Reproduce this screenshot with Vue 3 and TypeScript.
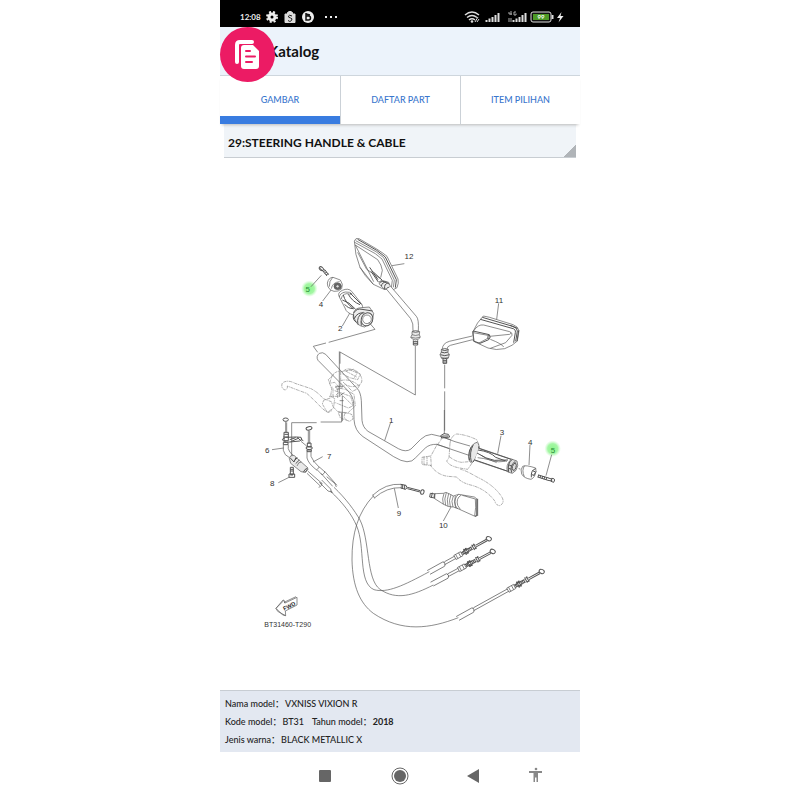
<script setup lang="ts">
import { ref } from 'vue'

interface Tab {
  id: string
  label: string
}

interface Callout {
  text: string
  x: number
  y: number
}

interface CableEnd {
  x: number
  y: number
  angle: number
  arm: number
}

const tabs: Tab[] = [
  { id: 'gambar', label: 'GAMBAR' },
  { id: 'daftar', label: 'DAFTAR PART' },
  { id: 'item', label: 'ITEM PILIHAN' },
]
const activeTab = ref<string>('gambar')
const figure = ref<string>('29')

// Part numbers, in drawing units (three per pixel)
const callouts: Callout[] = [
  { text: '12', x: 567, y: 303 },
  { text: '11', x: 837, y: 434 },
  { text: '5', x: 263, y: 403 },
  { text: '4', x: 303, y: 446 },
  { text: '2', x: 361, y: 520 },
  { text: '1', x: 514, y: 794 },
  { text: '3', x: 846, y: 831 },
  { text: '4', x: 931, y: 862 },
  { text: '5', x: 999, y: 884 },
  { text: '6', x: 142, y: 886 },
  { text: '7', x: 328, y: 904 },
  { text: '8', x: 157, y: 985 },
  { text: '9', x: 537, y: 1073 },
  { text: '10', x: 670, y: 1111 },
]

const cableEnds: CableEnd[] = [
  { x: 628, y: 1241, angle: -29, arm: 0 },
  { x: 638, y: 1276, angle: -28, arm: 0 },
  { x: 715, y: 1379, angle: -29, arm: 82 },
]
</script>

<template>
  <div class="phone">
    <div class="status">
      <span class="clock">12:08</span>
      <svg class="left-icons" width="100" height="14" viewBox="0 0 100 14" aria-hidden="true">
        <circle cx="7" cy="7" r="3" fill="none" stroke="#eee" stroke-width="3" />
        <circle cx="7" cy="7" r="5" fill="none" stroke="#eee" stroke-width="2" stroke-dasharray="2 2" />
        <path d="M20 4h10v8.500h-10zM22.500 4V2.500q2.500-2.500 5 0V4" fill="#ddd" stroke="#ddd" />
        <path d="M27 6q-3-1.500-3.500 0t2 2 1 2.500-3.500 0" fill="none" stroke="#222" stroke-width="1" />
        <circle cx="43" cy="7" r="6" fill="#eee" />
        <path d="M41 3v7h2.500a2 2 0 0 0 0-4H41M41 4l4 1" fill="none" stroke="#111" stroke-width="1.500" />
        <path d="M60 7h2M65 7h2M70 7h2" stroke="#eee" stroke-width="2" />
      </svg>
      <svg class="right-icons" width="102" height="16" viewBox="0 0 102 16" aria-hidden="true">
        <g fill="none" stroke="#ddd" stroke-width="1.500">
          <path d="M1 6q7-6 14 0M3 8.500q5-4 10 0M5 11q3-2.500 6 0" />
          <path d="M11 13l3-5M13 13l2-3" stroke-width="1" />
        </g>
        <circle cx="8" cy="12.500" r="1.300" fill="#ddd" />
        <path d="M22.500 13v-2M25.500 13V9.500M28.500 13V8M31.500 13V6M34.500 13V4M49.500 13v-2M52.500 13V9.500M55.500 13V8M58.500 13V6M61.500 13V4" stroke="#ddd" stroke-width="2" />
        <path d="M45 3v2h3M47 2v4M52 3h-2v3h2V4.500M45 9v4M47 9v4" fill="none" stroke="#aaa" stroke-width="1" />
        <rect x="67" y="3" width="20" height="10" rx="2" fill="#111" stroke="#ddd" />
        <rect x="69" y="5" width="16" height="6" fill="#4d9a26" />
        <text x="77" y="10" class="charge">99</text>
        <path d="M88.500 6v4" stroke="#ddd" stroke-width="2" />
        <path d="M97.500 3L93 9h3l-1.500 4.500L99.500 7h-3z" fill="#eee" />
      </svg>
    </div>

    <header class="header">
      <h1>Katalog</h1>
      <button class="float" type="button" aria-label="Salin">
        <svg width="55" height="55" viewBox="0 0 55 55" aria-hidden="true">
          <path d="M17 35V18q0-3 3-3H32" fill="none" stroke="#fff" stroke-width="4" stroke-linecap="round" />
          <path d="M24 18h9l6 6v15q0 3-3 3H24q-3 0-3-3V21q0-3 3-3z" fill="#fff" />
          <path d="M26 24h4M26 29.500h9M26 35h6" stroke="#ec1b64" stroke-width="2" stroke-linecap="round" />
        </svg>
      </button>
    </header>

    <nav class="tabs" role="tablist">
      <button
        v-for="tab in tabs"
        :key="tab.id"
        type="button"
        role="tab"
        class="tab"
        :class="{ active: tab.id === activeTab }"
        :aria-selected="tab.id === activeTab"
        @click="activeTab = tab.id"
      >
        {{ tab.label }}
      </button>
    </nav>

    <div class="picker">
      <select v-model="figure" aria-label="Figure">
        <option value="29">29:STEERING HANDLE &amp; CABLE</option>
      </select>
    </div>

    <main class="figure">
      <svg class="drawing" viewBox="0 0 1080 1596" role="img" aria-label="Steering handle and cable">
        <defs>
          <radialGradient id="glow">
            <stop offset="0" stop-color="#8df58d" />
            <stop offset="0.600" stop-color="#a4f7a4" />
            <stop offset="1" stop-color="#c8fbc8" stop-opacity="0" />
          </radialGradient>
        </defs>
        <circle cx="268" cy="392" r="25" fill="url(#glow)" />
        <circle cx="998" cy="872" r="25" fill="url(#glow)" />

        <!-- left mirror, bar end and throttle grip -->
        <g class="ink" transform="translate(210 201)">
          <path d="M193 48L198 41L207 41L260 72Q282 86 291 94L324 162Q327 174 321 188L310 194L282 193L250 178Q222 151 210 127Q194 88 193 48z" fill="#fff" />
          <path d="M197 47L258 80L281 98L313 165L310 187M194 52L256 86L276 102L307 166L304 188" />
          <path class="bold" d="M203 43L260 76L286 96L319 164L316 188" />
          <path d="M196 60L263 104Q275 120 277 136L272 158M196 60L251 170M203 82L230 133L270 160M210 127L250 178" />
          <path class="bold" d="M239 127L264 164M243 139L265 171M250 141L276 165" />
          <path d="M268 177Q263 169 276 166L296 172L302 186L283 193z" fill="#eee" />
          <path class="bold" d="M270 172Q283 164 298 178M274 184q2-13 14-12M284 192q-2-16 9-17M292 188l9-2" />
          <path d="M290 193L362 281Q371 294 369 318H385Q387 282 379 274L302 184" fill="#fff" />
          <path d="M366 320Q375 315 389 320L388 329L391 337Q387 344 376 345Q365 343 362 337L366 329z" fill="#e8e8e8" />
          <path d="M366 329q10 5 22 0M366 320q10 5 22 0M363 337q14 5 27 0" />
          <path class="bold" d="M370 346v14h13v-14M370 350h13M370 355h13" />
          <path d="M376 363V510L150 381V416" />
          <path d="M343 116L306 122M63 185L94 151M98 228L124 194M157 303L179 265" />
          <ellipse class="bold" cx="94" cy="131" rx="7" ry="5" transform="rotate(35 94 131)" />
          <path class="bold" d="M97 136L111 153M103 133L116 149M100 140l7-4M104 145l7-4M108 150l7-4M88 128l8 8" />
          <path d="M112 174Q116 157 129 157L151 165Q161 178 155 191Q145 201 132 199Q112 194 112 174zM124 191Q127 172 149 170M128 157Q117 168 118 185" fill="#fff" />
          <ellipse class="dark" cx="143" cy="184" rx="11" ry="10" />
          <path class="white" d="M138 184h9M143 180v8" />
          <path d="M148 216Q141 203 157 196Q175 188 185 199L215 237Q220 243 216 252L194 271Q169 265 165 249z" fill="#fff" />
          <path d="M148 216Q150 204 166 201Q181 200 187 207M154 222Q155 208 170 206L184 208" />
          <path class="bold" d="M157 225Q177 230 197 253M164 238Q174 251 191 251M175 208Q187 230 210 239M160 210Q165 232 190 251M180 204L214 238" />
          <path d="M190 269Q191 249 214 248L238 246L251 265L246 291L224 306Q199 302 194 282z" fill="#ededed" />
          <path class="bold" d="M191 264Q200 249 216 253L248 258M193 281Q202 260 224 264M204 299Q198 274 220 262M214 302Q209 277 230 266M191 268q-5 17 9 24" />
          <ellipse class="bold" cx="231" cy="283" rx="17" ry="20" transform="rotate(25 231 283)" fill="#fff" />
          <circle cx="231" cy="283" r="13" />
          <path d="M236 291L255 313L116 352M108 354L70 364L83 382" />
        </g>

        <!-- right mirror -->
        <g class="ink" transform="translate(600 366)">
          <path d="M158 157Q171 126 190 108L209 112L279 134Q294 139 297 152L292 183Q279 197 254 206Q229 212 204 204L163 185z" fill="#fff" />
          <path class="bold" d="M187 112L278 139Q292 143 292 153L287 184M181 118L276 145Q288 147 286 158L281 188M296 151L291 184M270 136L293 145" />
          <path d="M160 154Q174 132 191 135L269 155Q278 158 276 166L257 188L211 205M209 169L269 163Q273 162 272 157M211 178Q247 192 251 201" />
          <path class="bold" d="M159 153L208 164Q214 172 206 179L180 190L160 183zM205 166q-4 8 1 12" />
          <path d="M160 158L209 167M177 189L209 172" />
          <path d="M157 168L88 184Q67 190 67 208H81Q81 199 91 196L158 179" fill="#fff" />
          <path d="M64 208Q75 202 85 208L84 217L88 224L85 234H64L60 224L64 216z" fill="#e8e8e8" />
          <path class="bold" d="M64 209q10 5 21 0M63 216q10 5 21 0M61 224q13 6 27 0M64 234q10 4 21 0M69 237v13h11v-13M69 241h11M69 246h11" />
          <path d="M74 254V325M74 334V452M236 70L230 118" />
        </g>

        <!-- handlebar, front lever and upper cable fittings -->
        <g class="ink" transform="translate(120 546)">
          <path d="M174 61Q167 49 178 40Q188 35 197 43L291 145Q302 155 304 182L306 241Q308 262 324 274L415 326Q438 338 453 327L482 298Q496 284 515 283L545 290L585 304M174 61L259 147Q280 168 281 190L282 239Q284 272 309 290L401 350Q448 379 467 353L496 324Q509 312 531 313L630 347" />
          <path d="M238 34V170M392 247L374 302M245 218V246H182M170 248H95V349M36 329L71 324M188 350L159 366M55 428L87 412" />
          <g class="phantom">
            <path d="M67 129Q61 144 75 150Q84 147 82 138Q109 149 140 160Q164 181 187 206L204 218L217 211M70 127Q85 119 105 130L153 146Q174 157 190 176L214 185L221 204L202 217L187 192L191 181L214 173" />
            <path d="M209 130L216 107Q230 90 244 95L281 88Q309 104 305 126L292 147L277 154L256 133L242 146L224 127zM216 140L212 168L224 176L221 202L232 214L262 220L286 198L282 163L256 148L225 142" />
            <path d="M250 94Q257 83 278 89L301 102L293 119L269 113L247 101M257 93L290 111M268 89L292 99L283 113M222 103L205 119L214 144M241 122Q270 114 297 137M249 126Q270 149 300 134" />
            <path d="M224 152L272 169L280 197L265 204L226 188M235 218Q255 214 276 224L279 237L269 244L241 234zM256 219q-9 14 5 22M219 145v28M233 147v27M207 169h35M242 95v47M250 169l29 28M228 165l10-8 15 16" />
          </g>
          <path d="M226 139h23M247 168v75M229 147h10M241 166l12-8M239 182h12" />
          <ellipse class="bold" cx="77" cy="239" rx="8" ry="5" />
          <path d="M77 245V277M80 247V277" />
          <path class="bold" d="M72 277h13v25h-13zM73 283h12M70 291h17M67 298L77 292L109 291L123 292Q130 299 119 303L89 306Q70 308 67 298zM70 307h14v7h-14zM89 299l18-6M92 305l25-11M112 292l9 9M122 298l8 4" />
          <path d="M70 314Q67 333 76 344L90 354M85 314Q82 326 90 337L101 347" />
          <path d="M88 355Q89 345 102 346L117 360L144 384L137 397L123 395L92 370z" fill="#e8e8e8" />
          <path class="bold" d="M91 354l11 12 6-14M99 366l13-13M107 371l11-11M130 397q4-11 12-12M135 397L144 388" />
          <path d="M111 378q4-13 13-12M144 394L188 432M141 400L181 438M182 427Q189 438 176 442" />
          <path class="bold" d="M91 382h9v21h-9zM91 388h9M91 393h9M87 402h17v10h-17zM91 405h8" />
          <ellipse class="bold" cx="147" cy="265" rx="9" ry="5" transform="rotate(-12 147 265)" />
          <path d="M145 272V312M149 272V312M123 304L140 318" />
          <path class="bold" d="M142 309h11v12h-11zM139 321q8-4 17 0v6q-9 4-17 0zM141 330h13v5h-13z" />
          <path d="M141 335V354Q145 371 171 391M153 335V349Q158 363 178 382M171 389l7-8 17 15-8 9zM183 400L218 439M193 393L231 436M178 427l26 26 14 4M185 420l27 27 3 11M200 410l25 21 4 10" />
        </g>

        <!-- clutch side controls, grip and cable boot -->
        <g class="ink" transform="translate(540 756)">
          <path d="M133 0V72" />
          <path d="M148 108Q150 77 170 72Q199 74 230 89L237 105L215 158L203 178L179 174L147 143z" class="cover" />
          <path d="M125 80L165 95L210 108M110 103L210 137" />
          <g class="phantom">
            <path d="M125 80L123 90L109 108L92 139M150 100Q153 77 170 72Q199 74 230 89L237 105M150 100L147 143L140 153Q147 168 179 174L203 178L217 158M148 140Q165 154 184 157L207 155" />
            <path d="M66 142L92 138L94 167L66 163zM72 140v26M81 138v28M90 164Q111 195 144 199L170 201Q184 219 216 226Q260 239 285 274Q287 286 300 287Q315 278 306 262Q284 226 231 201Q195 180 181 178" />
          </g>
          <path class="bold" d="M122 77Q131 67 145 73L149 81L125 84zM127 78h17" />
          <path d="M209 129Q213 100 231 97Q241 104 234 124Q225 154 215 159Q201 153 209 129z" fill="#e8e8e8" />
          <path class="bold" d="M214 110Q202 130 209 151M220 104Q207 127 214 156M237 109Q238 134 219 156" />
          <path d="M236 114L338 149L323 184L224 151" fill="#fff" />
          <path class="bold" d="M236 115L339 150M225 150L321 183M234 120Q271 125 287 142L320 154M231 129Q258 147 283 151L324 150" />
          <path d="M242 135Q277 161 315 154M233 143Q269 147 290 158" />
          <path d="M334 147L351 153Q357 166 348 181L337 190L323 186Q315 166 334 147z" fill="#ddd" />
          <path class="bold" d="M336 149Q321 160 326 186M346 154Q328 166 335 188M346 158Q332 170 339 181Q347 182 349 166zM324 174l10 4M326 164l10 5" />
          <path d="M356 176l5 1M368 169Q377 164 407 174L408 184Q405 203 393 208Q372 205 365 192Q360 179 368 169zM374 167Q364 180 373 200" fill="#fff" />
          <path class="bold" d="M407 176Q392 180 394 202M397 182l8 3M395 194l8 2M408 184l-7 13" />
          <path class="bold" d="M415 195L446 204M413 201L444 211M416 194l-2 8M422 196l-2 8M428 198l-2 8M434 200l-2 8M440 202l-2 8" />
          <path class="bold" d="M445 204l10 3v6l-11-2M455 205q8-1 9 5l-3 7-8-3z" />
          <path d="M303 77L293 131M390 104L387 165M455 134L438 197M130 333L153 291" />
          <path class="bold" d="M2 223L18 226L21 233L17 238L2 234M8 223v13M14 225v13M22 232L61 242M22 236L60 246" />
          <ellipse class="bold" cx="67" cy="246" rx="5" ry="7" transform="rotate(15 67 246)" />
          <path class="bold" d="M91 250l14 2-2 12-14-3zM97 248l-3 16" />
          <path d="M105 251L130 250Q137 244 147 251L160 258L176 253L223 261L231 267L230 316L225 319L174 296L160 291Q145 292 131 283L104 266z" fill="#fff" />
          <path d="M176 253Q161 264 166 286L173 297M184 255Q167 265 173 286L181 298M105 251q-6 8-1 15M187 256L226 267Q229 291 224 318M233 266V318" />
          <path d="M132 250q-7 17-2 33M139 248q-8 19-2 38M146 251q-7 17-2 38M153 254q-8 17-2 37M160 258q-8 15-1 33M166 258q-5 16 1 36" />
          <path class="bold" d="M231 267L231 317L225 319" />
        </g>

        <!-- cable runs -->
        <g class="ink" transform="translate(120 936)">
          <path d="M222 52C258 86 284 122 300 150C330 210 318 328 360 358C410 392 459 376 520 345" />
          <path d="M210 62C248 98 275 132 290 168C317 231 293 338 342 359C382 370 430 347 508 305" />
          <path d="M340 78C295 125 275 190 276 270C278 350 300 400 340 430C426 488 510 476 595 443" />
          <path d="M338 76Q377 39 424 43M343 84Q380 51 424 53M338 74l6 11M424 42v13M403 55L415 114" />
          <path d="M48 415L72 391L75 399L111 382V405L76 423L77 437L68 435zM48 415l5 9 24 13M75 399l-3-2 36-17M72 391l-3-1-21 25" />
        </g>

        <g
          v-for="end in cableEnds"
          :key="end.y"
          class="ink"
          :transform="`translate(${end.x} ${end.y}) rotate(${end.angle})`"
        >
          <path d="M-4 -6H50L53 -2M-2 8H48L53 3M51 -4q5 4 0 9" />
          <path :d="`M54 -4H${90 + end.arm}M54 4H${90 + end.arm}`" />
          <g :transform="`translate(${end.arm} 0)`">
            <path d="M88 -7H111V7H88zM94 -7V7M104 -7V7" fill="#fff" />
            <path class="bold" d="M111 -4H147M111 4H147M115 -5v10M119 -5v10M123 -10v20M129 -10v20M134 -6v12M139 -5v10M144 -5v10M120 -7h12M120 7h12M150 -9v18M156 -9v18M149 -6h10M149 6h10M159 -2H197M159 3H197" />
            <ellipse class="bold" cx="204" cy="0" rx="8" ry="6" transform="rotate(55 204 0)" fill="#fff" />
          </g>
        </g>

        <text v-for="(c, i) in callouts" :key="i" class="callout" :class="{ marked: c.text === '5' }" :x="c.x" :y="c.y">{{ c.text }}</text>
        <text class="fwd" transform="translate(193 1358) rotate(-26)">FWD</text>
        <text class="code" x="133" y="1407">BT31460-T290</text>
      </svg>
    </main>

    <footer class="info">
      <p><span>Nama model：</span><b>VXNISS VIXION R</b></p>
      <p><span>Kode model：</span><b>BT31</b><span class="year">Tahun model：</span><b class="strong">2018</b></p>
      <p><span>Jenis warna：</span><b>BLACK METALLIC X</b></p>
    </footer>

    <nav class="system" aria-label="System">
      <button type="button" aria-label="Recents">
        <svg width="20" height="20" viewBox="0 0 20 20"><rect x="4" y="4" width="12" height="12" rx="1" fill="#666" /></svg>
      </button>
      <button type="button" aria-label="Home">
        <svg width="20" height="20" viewBox="0 0 20 20"><circle cx="10" cy="10" r="8" fill="none" stroke="#666" stroke-width="1" /><circle cx="10" cy="10" r="6" fill="#666" /></svg>
      </button>
      <button type="button" aria-label="Back">
        <svg width="20" height="20" viewBox="0 0 20 20"><path d="M3 10L15 3V17z" fill="#666" /></svg>
      </button>
      <button type="button" aria-label="Accessibility">
        <svg width="20" height="20" viewBox="0 0 20 20"><circle cx="10" cy="3" r="1.300" fill="#888" /><path d="M3 5H16V7H12V16H10.500V11.500H9V16H7.500V7H3z" fill="#888" /></svg>
      </button>
    </nav>
  </div>
</template>

<style>
body {
  margin: 0;
  background: #fff;
}
</style>

<style scoped>
.phone {
  display: flex;
  flex-direction: column;
  box-sizing: border-box;
  width: 100%;
  max-width: 360px;
  min-height: 100vh;
  margin: 0 auto;
  font-family: Lato, "Noto Sans CJK SC", sans-serif;
  color: #111;
}

button {
  margin: 0;
  padding: 0;
  border: 0;
  background: none;
  font: inherit;
}

svg {
  display: block;
}

.status {
  display: flex;
  align-items: center;
  height: 27px;
  padding: 6px 14px 0 20px;
  box-sizing: border-box;
  background: #000;
  color: #eee;
}

.clock {
  width: 25px;
  font-size: 8px;
  font-weight: 700;
}

.right-icons {
  margin-left: auto;
}

.charge {
  font-size: 6px;
  font-weight: 700;
  text-anchor: middle;
  fill: #fff;
}

.header {
  position: relative;
  display: flex;
  align-items: center;
  height: 48px;
  padding-left: 48px;
  background: #ecf3fb;
}

.header h1 {
  margin: 0;
  font-size: 15px;
  font-weight: 700;
}

.float {
  position: absolute;
  z-index: 2;
  top: 0;
  left: 0;
  width: 55px;
  height: 55px;
  border-radius: 50%;
  background: #ec1b64;
}

.tabs {
  position: relative;
  z-index: 1;
  display: grid;
  grid-template-columns: repeat(3, 1fr);
  height: 49px;
  border-top: 1px solid #ced6dd;
  box-sizing: border-box;
  box-shadow: 0 3px 3px -2px #bbb;
}

.tab {
  padding-bottom: 2px;
  border-left: 1px solid #cbd1d7;
  background: #fff;
  color: #3976cd;
  font-size: 9px;
  font-weight: 500;
}

.tab:first-child {
  border-left: 0;
}

.tab.active {
  box-shadow: inset 0 -8px #397ce0;
}

.picker {
  position: relative;
  margin: 0 4px;
  padding-top: 3px;
  background: #f0f4f8;
  border-bottom: 1px solid #c8cdd2;
}

.picker::after {
  content: "";
  position: absolute;
  right: 0;
  bottom: 0;
  width: 12px;
  height: 12px;
  background: linear-gradient(135deg, transparent 50%, #b0b4b8 50%);
  pointer-events: none;
}

.picker select {
  display: block;
  width: 100%;
  height: 30px;
  padding: 0 4px;
  border: 0;
  appearance: none;
  background: transparent;
  color: #111;
  font-family: inherit;
  font-size: 12px;
  font-weight: 700;
}

.figure {
  flex: 1;
}

.drawing {
  width: 100%;
  height: auto;
}

.ink {
  fill: none;
  stroke: #555;
  stroke-width: 2;
  stroke-linejoin: round;
}

.bold {
  stroke-width: 3;
}

.cover {
  fill: #fff;
  stroke: none;
}

.dark {
  fill: #666;
}

.white {
  stroke: #fff;
}

.phantom {
  stroke: #888;
  stroke-dasharray: 10 2 3 2;
}

.callout {
  font-family: "Liberation Sans", sans-serif;
  font-size: 24px;
  text-anchor: middle;
  fill: #333;
}

.marked {
  fill: #268b36;
}

.fwd {
  font-family: "Liberation Sans", sans-serif;
  font-size: 17px;
  font-weight: 700;
  fill: #222;
}

.code {
  font-family: "Liberation Sans", sans-serif;
  font-size: 21px;
  fill: #333;
}

.info {
  padding: 4px 5px 3px;
  border-top: 1px solid #c8cdd3;
  background: #e3e8f1;
  color: #222;
  font-size: 9px;
  font-weight: 500;
}

.info p {
  display: flex;
  margin: 0;
  height: 18px;
  line-height: 18px;
  white-space: pre;
}

.info b {
  margin-left: 1px;
  font-weight: 500;
}

.info .strong {
  font-weight: 700;
}

.info .year {
  margin-left: 8px;
}

.system {
  display: grid;
  grid-template-columns: 75fr 74fr 62fr 20px;
  align-items: center;
  justify-items: start;
  height: 48px;
  padding: 0 34px 0 95px;
  background: #fff;
}
</style>
